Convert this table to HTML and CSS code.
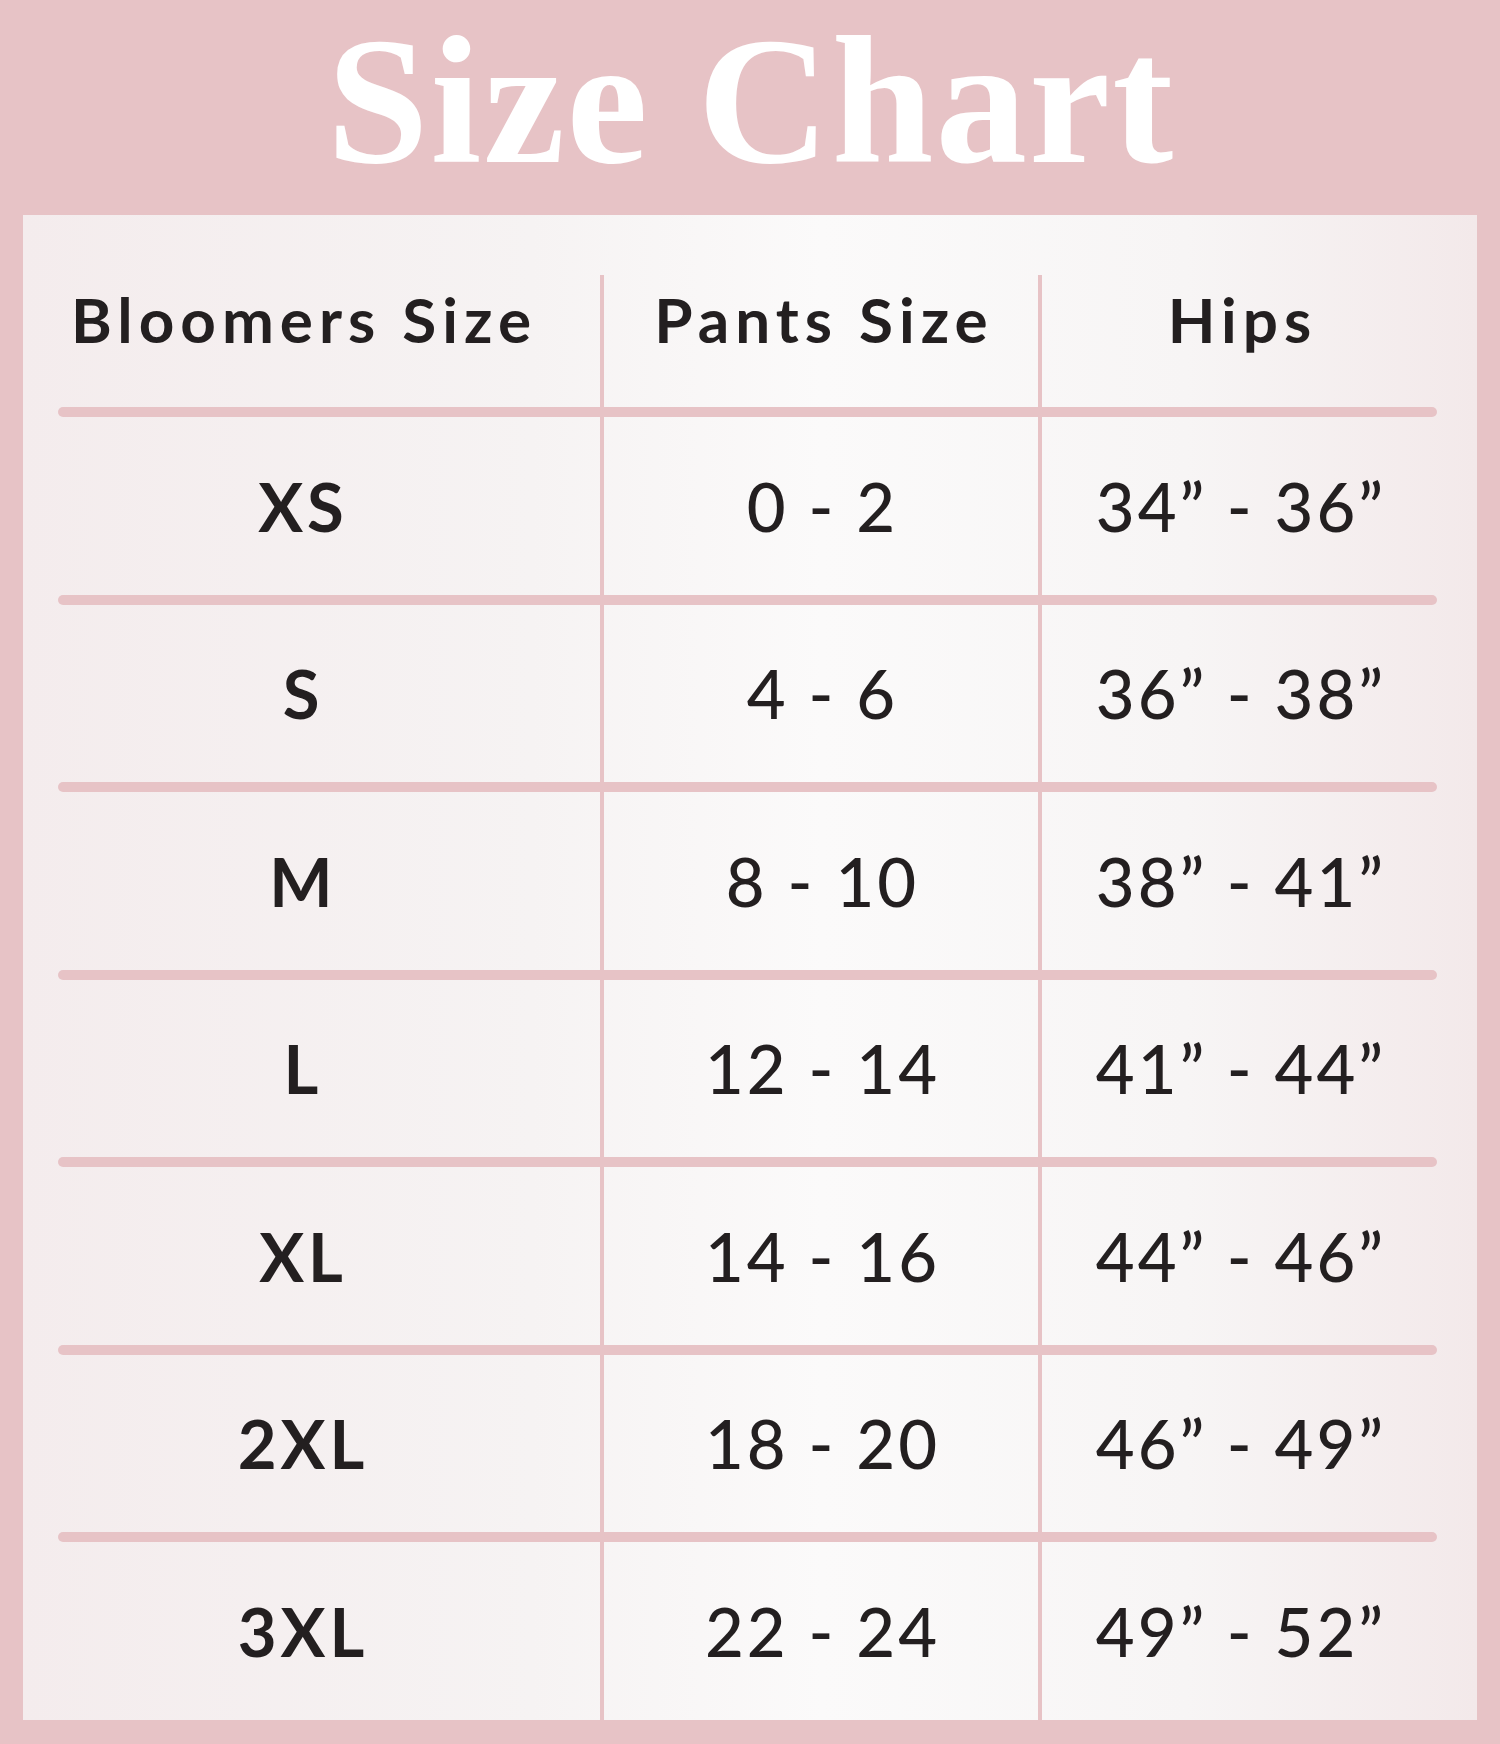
FILE: index.html
```html
<!DOCTYPE html>
<html lang="en">
<head>
<meta charset="utf-8">
<title>Size Chart</title>
<link rel="stylesheet" href="styles.css">
</head>
<body>
<div class="page">
  <h1 class="title">Size Chart</h1>
  <div class="panel">
    <div class="row head">
      <div class="cell c1">Bloomers Size</div>
      <div class="cell c2">Pants Size</div>
      <div class="cell c3">Hips</div>
    </div>
    <div class="rule"></div>
    <div class="row">
      <div class="cell c1 size">XS</div>
      <div class="cell c2">0 - 2</div>
      <div class="cell c3">34” - 36”</div>
    </div>
    <div class="rule"></div>
    <div class="row">
      <div class="cell c1 size">S</div>
      <div class="cell c2">4 - 6</div>
      <div class="cell c3">36” - 38”</div>
    </div>
    <div class="rule"></div>
    <div class="row">
      <div class="cell c1 size">M</div>
      <div class="cell c2">8 - 10</div>
      <div class="cell c3">38” - 41”</div>
    </div>
    <div class="rule"></div>
    <div class="row">
      <div class="cell c1 size">L</div>
      <div class="cell c2">12 - 14</div>
      <div class="cell c3">41” - 44”</div>
    </div>
    <div class="rule"></div>
    <div class="row">
      <div class="cell c1 size">XL</div>
      <div class="cell c2">14 - 16</div>
      <div class="cell c3">44” - 46”</div>
    </div>
    <div class="rule"></div>
    <div class="row">
      <div class="cell c1 size">2XL</div>
      <div class="cell c2">18 - 20</div>
      <div class="cell c3">46” - 49”</div>
    </div>
    <div class="rule"></div>
    <div class="row">
      <div class="cell c1 size">3XL</div>
      <div class="cell c2">22 - 24</div>
      <div class="cell c3">49” - 52”</div>
    </div>
  </div>
</div>
</body>
</html>
```
FILE: styles.css
```css
html, body {
  margin: 0;
  padding: 0;
}
body {
  background: #e7c3c6;
  width: 1500px;
  height: 1744px;
  overflow: hidden;
}
.page {
  width: 1500px;
  height: 1744px;
  box-sizing: border-box;
  padding: 0 23px 24px 23px;
  display: flex;
  flex-direction: column;
}
.title {
  margin: 0;
  height: 215px;
  box-sizing: border-box;
  padding-bottom: 14px;
  padding-left: 2px;
  line-height: 201px;
  text-align: center;
  color: #ffffff;
  font-family: "Liberation Serif", "DejaVu Serif", serif;
  font-weight: 700;
  font-size: 183px;
  letter-spacing: 2px;
}
.panel {
  height: 1505px;
  box-sizing: border-box;
  padding: 60px 40px 0 35px;
  background: linear-gradient(90deg, #f4eced 0%, #f6f3f3 35%, #fbfafa 55%, #f7f5f5 80%, #f3e9ea 100%);
  display: flex;
  flex-direction: column;
}
.row {
  display: flex;
  height: 177.5px;
  color: #231f20;
  font-family: "Lato", "Open Sans", sans-serif;
  font-size: 67px;
  font-weight: 500;
  line-height: 1.2;
  letter-spacing: 3px;
}
.row.head {
  height: 132px;
  font-size: 62px;
  font-weight: 700;
  letter-spacing: 6px;
}
.cell {
  display: flex;
  align-items: center;
  justify-content: center;
  box-sizing: border-box;
  white-space: pre;
  padding-left: 3px;
}
.head .cell {
  align-items: flex-start;
  padding-top: 7px;
  padding-left: 6px;
}
.c1 {
  width: 542px;
  padding-right: 56px;
}
.c2 {
  width: 438px;
  border-left: 4px solid #e7c3c6;
}
.c3 {
  width: 399px;
  border-left: 4px solid #e7c3c6;
}
.size {
  font-weight: 700;
  letter-spacing: 4px;
}
.row .size {
  padding-left: 4px;
}
.rule {
  height: 10px;
  background: #e7c3c6;
  border-radius: 5px;
  flex: none;
}
```
